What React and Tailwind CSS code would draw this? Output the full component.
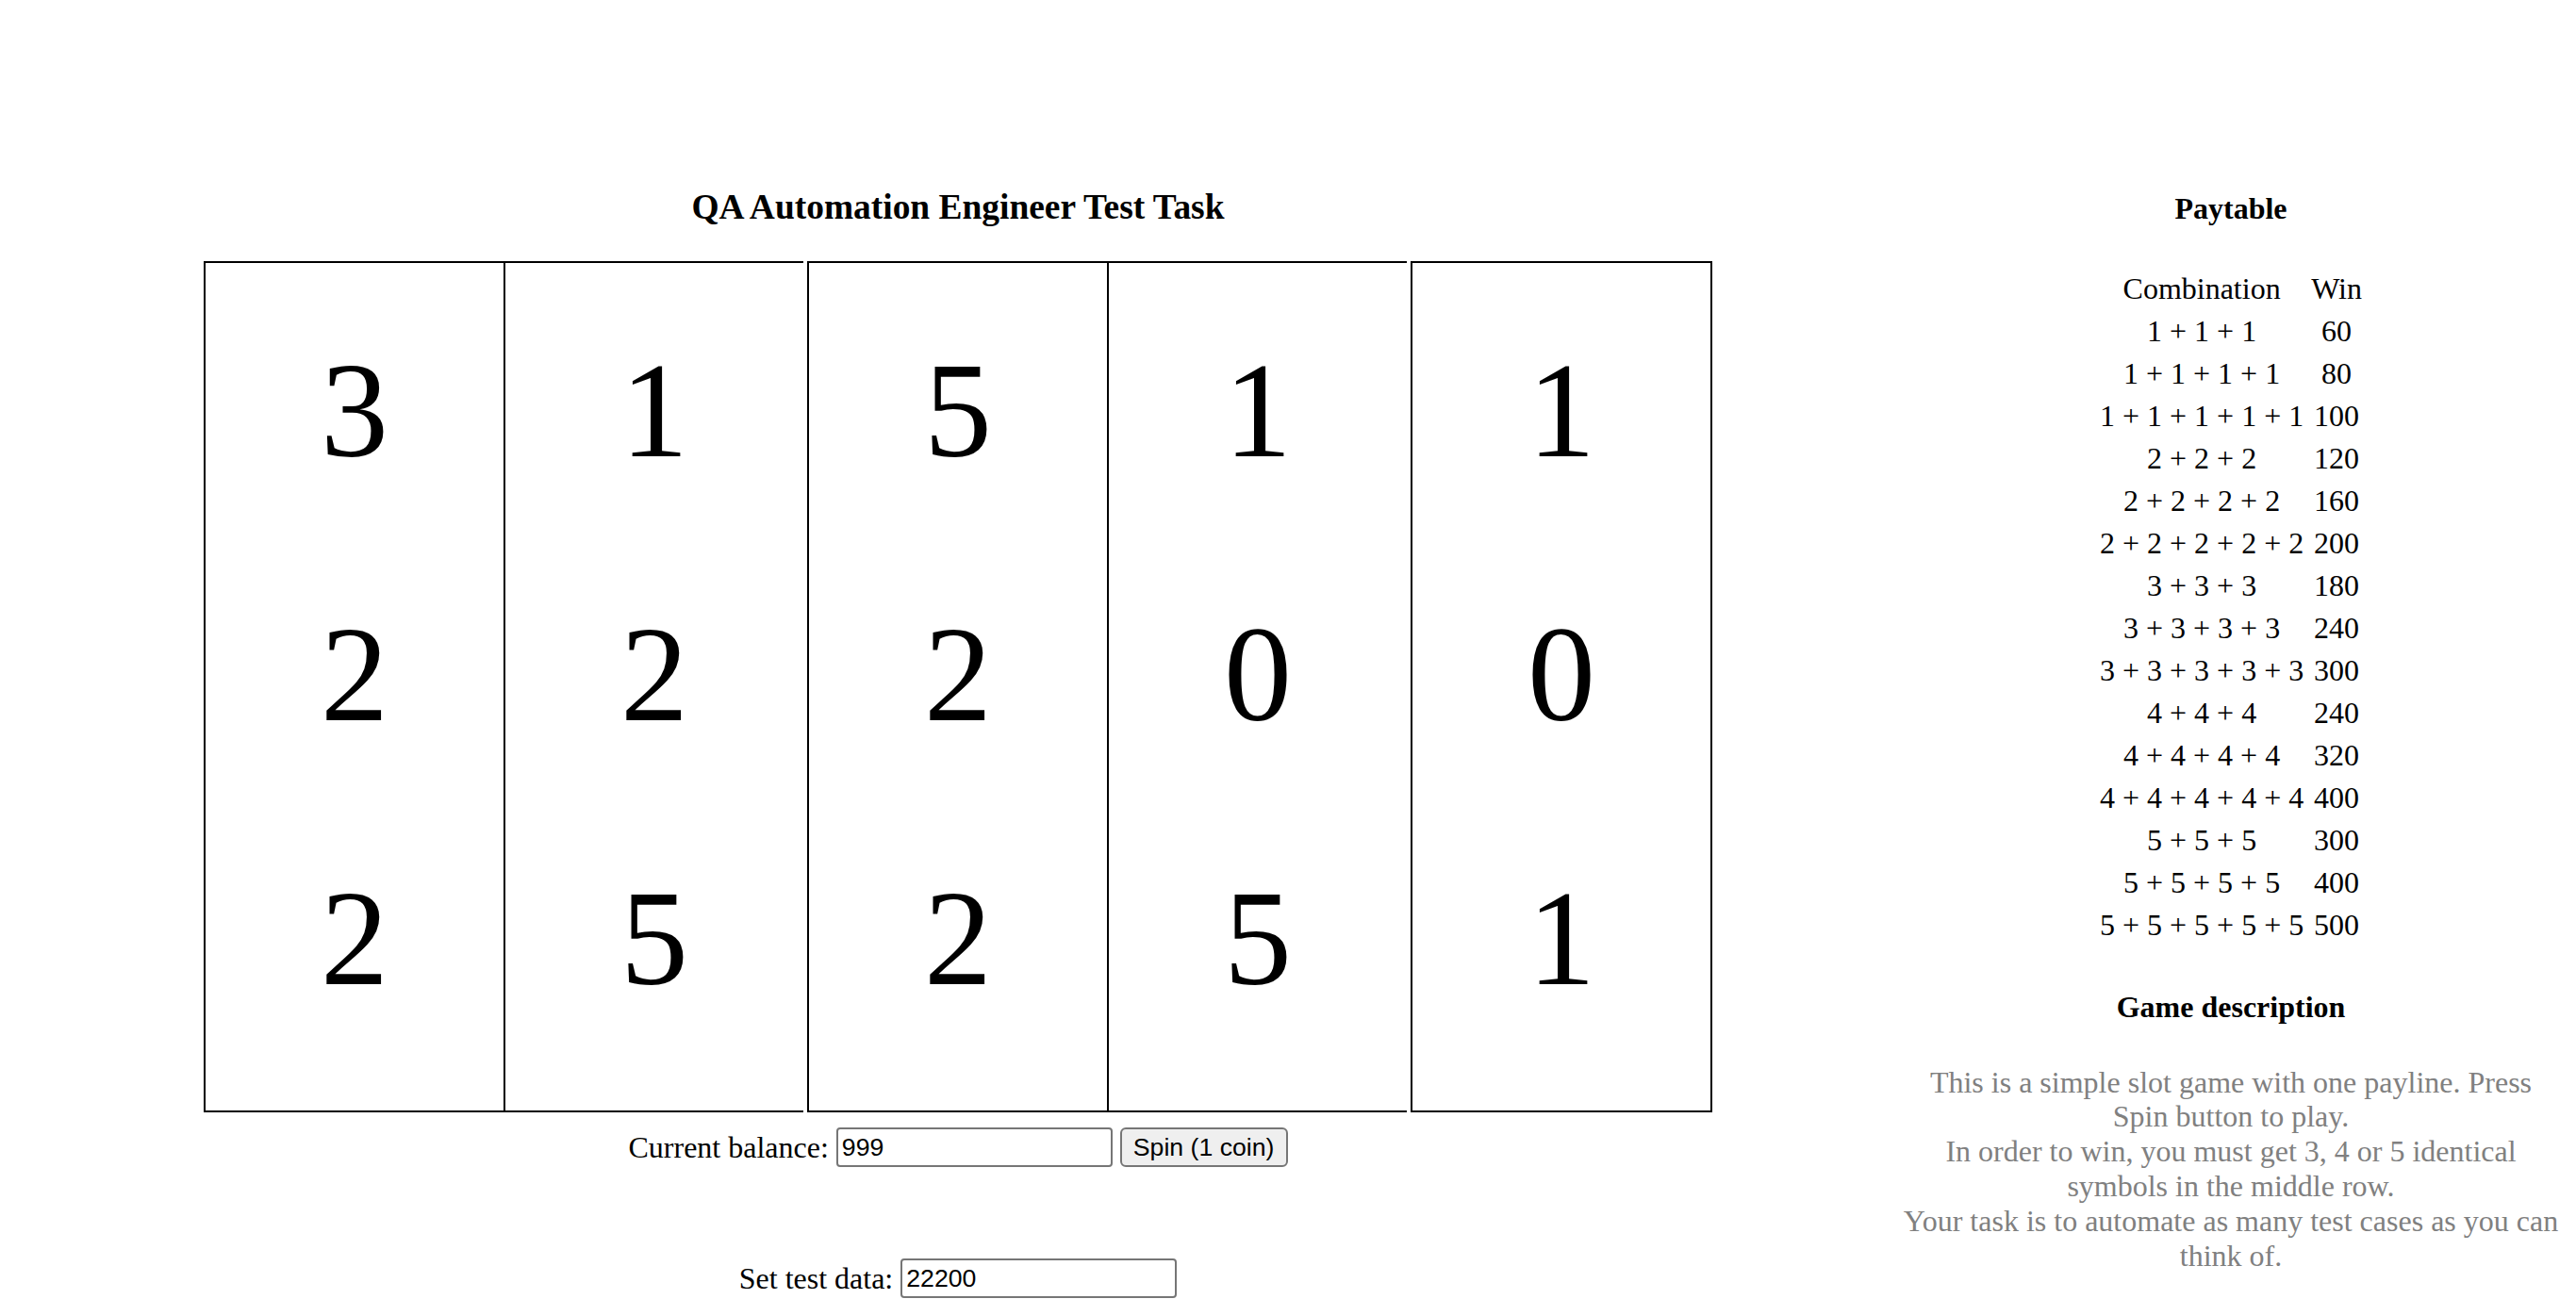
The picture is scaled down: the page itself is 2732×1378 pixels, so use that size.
import React, { useState } from 'react';

const reels = [
  ['3', '2', '2'],
  ['1', '2', '5'],
  ['5', '2', '2'],
  ['1', '0', '5'],
  ['1', '0', '1'],
];

const paytable = [
  ['1 + 1 + 1', '60'],
  ['1 + 1 + 1 + 1', '80'],
  ['1 + 1 + 1 + 1 + 1', '100'],
  ['2 + 2 + 2', '120'],
  ['2 + 2 + 2 + 2', '160'],
  ['2 + 2 + 2 + 2 + 2', '200'],
  ['3 + 3 + 3', '180'],
  ['3 + 3 + 3 + 3', '240'],
  ['3 + 3 + 3 + 3 + 3', '300'],
  ['4 + 4 + 4', '240'],
  ['4 + 4 + 4 + 4', '320'],
  ['4 + 4 + 4 + 4 + 4', '400'],
  ['5 + 5 + 5', '300'],
  ['5 + 5 + 5 + 5', '400'],
  ['5 + 5 + 5 + 5 + 5', '500'],
];

// borders per reel: pairs are joined, last one closes on the right
const reelClass = [
  'border-l-2 border-t-2 border-b-2',
  'border-l-2 border-t-2 border-b-2',
  'ml-[4px] border-l-2 border-t-2 border-b-2',
  'border-l-2 border-t-2 border-b-2',
  'ml-[4px] border-2 w-[320px]',
];

const Reel = ({ symbols, className }) => (
  <div className={`w-[318px] h-[903px] border-black flex flex-col pt-[17px] ${className}`}>
    {symbols.map((s, i) => (
      <div key={i} className="h-[280px] flex items-center justify-center text-[144px] leading-none">
        {s}
      </div>
    ))}
  </div>
);

const App = () => {
  const [balance, setBalance] = useState('999');
  const [testData, setTestData] = useState('22200');

  return (
    <div className="w-full min-h-screen bg-white flex px-[16px] text-black text-[32px] leading-[36.8px] font-['Liberation_Serif',serif]">
      <div className="flex-1 flex flex-col items-center pt-[198px]">
        <h1 className="text-[37.44px] leading-[43px] font-bold">QA Automation Engineer Test Task</h1>
        <div className="flex mt-[36px]">
          {reels.map((r, i) => (
            <Reel key={i} symbols={r} className={reelClass[i]} />
          ))}
        </div>
        <div className="flex items-center gap-[8px] mt-[16px]">
          <span>Current balance:</span>
          <input
            type="text"
            value={balance}
            onChange={e => setBalance(e.target.value)}
            className="w-[293px] h-[42px] border-2 border-[#767676] rounded-[4px] px-[4px] text-[26.67px] font-['Liberation_Sans',sans-serif] outline-none"
          />
          <button className="h-[42px] px-[12px] bg-[#efefef] border-2 border-[#767676] rounded-[6px] text-[26.67px] font-['Liberation_Sans',sans-serif]">
            Spin (1 coin)
          </button>
        </div>
        <div className="flex items-center gap-[8px] mt-[97px]">
          <span>Set test data:</span>
          <input
            type="text"
            value={testData}
            onChange={e => setTestData(e.target.value)}
            className="w-[293px] h-[42px] border-2 border-[#767676] rounded-[4px] px-[4px] text-[26.67px] font-['Liberation_Sans',sans-serif] outline-none"
          />
        </div>
      </div>

      <div className="w-[700px] flex flex-col items-center pt-[203px]">
        <h4 className="font-bold">Paytable</h4>
        <table className="mt-[42px] border-separate border-spacing-[4px] leading-[37px]">
          <tbody>
            <tr>
              <td className="px-[2px] py-[2px] text-center">Combination</td>
              <td className="px-[2px] py-[2px] text-center">Win</td>
            </tr>
            {paytable.map(([combo, win]) => (
              <tr key={combo}>
                <td className="px-[2px] py-[2px] text-center">{combo}</td>
                <td className="px-[2px] py-[2px] text-center">{win}</td>
              </tr>
            ))}
          </tbody>
        </table>
        <h4 className="font-bold mt-[44px]">Game description</h4>
        <div className="mt-[43px] text-center text-[#808080]">
          This is a simple slot game with one payline. Press Spin button to play.
          <br />
          In order to win, you must get 3, 4 or 5 identical symbols in the middle row.
          <br />
          Your task is to automate as many test cases as you can think of.
        </div>
      </div>
    </div>
  );
};

export default App;
